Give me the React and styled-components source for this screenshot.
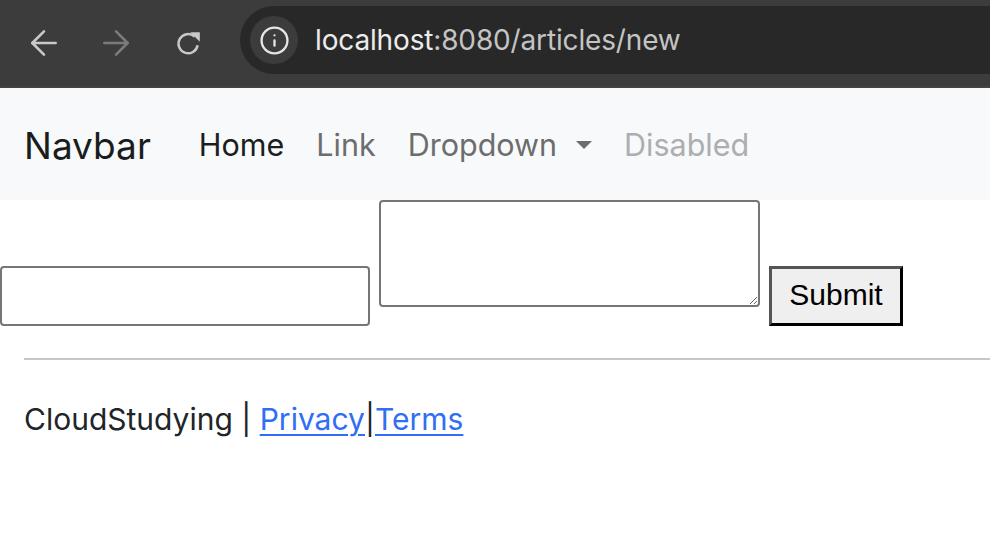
import styled, { createGlobalStyle } from "styled-components"
import { ArrowLeft, ArrowRight, Info } from "lucide-react"

const GlobalStyle = createGlobalStyle`
    html, body {
        margin: 0;
        padding: 0;
        background: #ffffff;
        font-family: Inter, "Noto Sans", sans-serif;
        color: #212529;
    }
`;

function ReloadIcon() {
    return (
        <svg width="25" height="25" viewBox="0 0 25 25" fill="none">
            <path d="M21.6 14.2A9.6 9.6 0 1 1 18.6 5.6" stroke="currentColor" strokeWidth="2.5" />
            <path d="M14.2 1.2h9.6v9.6z" fill="currentColor" />
        </svg>
    )
}

function App() {
    return (
        <Page>
            <GlobalStyle />
            <Chrome>
                <NavButton><ArrowLeft size={40} strokeWidth={1.55} /></NavButton>
                <NavButton $dim><ArrowRight size={40} strokeWidth={1.55} /></NavButton>
                <NavButton $narrow><ReloadIcon /></NavButton>
                <Omnibox>
                    <SiteInfo><Info size={31} strokeWidth={1.8} /></SiteInfo>
                    <Url>localhost<span>:8080/articles/new</span></Url>
                </Omnibox>
            </Chrome>

            <Navbar>
                <Brand>Navbar</Brand>
                <NavLink $tone="active">Home</NavLink>
                <NavLink>Link</NavLink>
                <NavLink>Dropdown<Caret /></NavLink>
                <NavLink $tone="disabled">Disabled</NavLink>
            </Navbar>

            <Form onSubmit={(e) => e.preventDefault()}>
                <TextInput type="text" />
                <TextArea />
                <SubmitButton type="submit">Submit</SubmitButton>
            </Form>

            <Footer>
                <Rule />
                <FooterText>
                    CloudStudying | <a href="#privacy">Privacy</a>|<a href="#terms">Terms</a>
                </FooterText>
            </Footer>
        </Page>
    )
}

const Page = styled.div`
    width: 990px;
    height: 544px;
    overflow: hidden;
`;

const Chrome = styled.div`
    height: 86px;
    background: #3c3c3c;
    border-bottom: 2px solid #444;
    display: flex;
    align-items: center;
    padding-left: 24px;
`;

const NavButton = styled.div`
    display: flex;
    align-items: center;
    justify-content: center;
    width: ${({ $narrow }) => $narrow ? '26px' : '40px'};
    margin-left: ${({ $narrow }) => $narrow ? '7px' : '0'};
    margin-right: ${({ $narrow }) => $narrow ? '0' : '32px'};
    color: ${({ $dim }) => $dim ? '#7b7b7b' : '#c8c8c8'};
`;

const Omnibox = styled.div`
    flex: 1;
    align-self: flex-start;
    margin-top: 6px;
    margin-left: 39px;
    height: 68px;
    background: #282828;
    border-radius: 34px 0 0 34px;
    display: flex;
    align-items: center;
    padding-left: 10px;
`;

const SiteInfo = styled.div`
    width: 48px;
    height: 48px;
    border-radius: 50%;
    background: #3c3c3c;
    color: #e6e6e6;
    display: flex;
    align-items: center;
    justify-content: center;
`;

const Url = styled.div`
    margin-left: 17px;
    font-family: Inter, sans-serif;
    font-size: 28px;
    letter-spacing: -0.15px;
    color: #ececec;
    span {
        color: #c4c4c4;
    }
`;

const Navbar = styled.nav`
    height: 112px;
    background: #f8f9fa;
    display: flex;
    align-items: center;
    padding-left: 24px;
`;

const Brand = styled.div`
    font-size: 37px;
    color: #1a1d20;
    margin-right: 32px;
    padding-top: 2px;
`;

const NavLink = styled.div`
    display: flex;
    align-items: center;
    padding: 0 16px;
    font-size: 30.5px;
    color: ${({ $tone }) =>
        $tone === 'active' ? '#1b1d20' :
        $tone === 'disabled' ? '#adaeaf' : '#6c6d6e'};
`;

const Caret = styled.span`
    display: inline-block;
    margin-left: 19px;
    margin-top: 2px;
    border-top: 8px solid #6c6d6e;
    border-left: 8px solid transparent;
    border-right: 8px solid transparent;
`;

const Form = styled.form`
    display: flex;
    align-items: flex-end;
    gap: 9px;
    margin: 0;
`;

const TextInput = styled.input`
    box-sizing: border-box;
    width: 370px;
    height: 60px;
    margin: 0;
    border: 2px solid #767676;
    border-radius: 4px;
    background: #fff;
`;

const TextArea = styled.textarea`
    box-sizing: border-box;
    width: 381px;
    height: 107px;
    margin: 0 0 19px;
    border: 2px solid #767676;
    border-radius: 4px;
    background: #fff;
    resize: both;
`;

const SubmitButton = styled.button`
    box-sizing: border-box;
    width: 134px;
    height: 60px;
    margin: 0;
    padding: 0 0 2px;
    background: #efefef;
    border: 3px solid;
    border-color: #555 #000 #000 #555;
    font-family: "Liberation Sans", Arial, sans-serif;
    font-size: 30px;
    color: #000;
`;

const Footer = styled.footer`
    padding-left: 24px;
`;

const Rule = styled.hr`
    margin: 32px 0 0;
    border: none;
    border-top: 2px solid #c8c8c8;
`;

const FooterText = styled.p`
    margin: 41px 0 0;
    font-size: 30px;
    color: #212529;
    a {
        color: #2f6ef5;
        text-decoration: underline;
        text-underline-offset: 4px;
        text-decoration-thickness: 2px;
    }
`;

export default App
